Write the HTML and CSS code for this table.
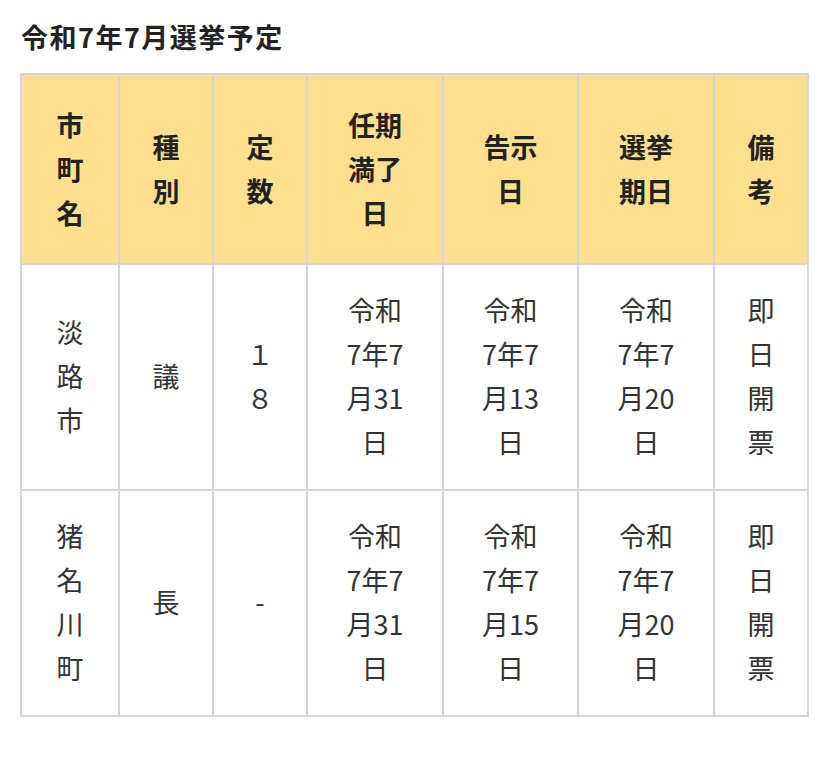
FILE: index.html
```html
<!DOCTYPE html>
<html lang="ja">
<head>
<meta charset="utf-8">
<title>令和7年7月選挙予定</title>
<link rel="stylesheet" href="styles.css">
</head>
<body>
<h2 class="title">令和7年7月選挙予定</h2>
<table class="sched">
  <colgroup>
    <col class="c-name">
    <col class="c-kind">
    <col class="c-seat">
    <col class="c-date">
    <col class="c-date2">
    <col class="c-date">
    <col class="c-note">
  </colgroup>
  <thead>
    <tr>
      <th>市町名</th>
      <th>種別</th>
      <th>定数</th>
      <th class="wide">任期満了日</th>
      <th class="wide">告示日</th>
      <th class="wide">選挙期日</th>
      <th>備考</th>
    </tr>
  </thead>
  <tbody>
    <tr>
      <td>淡路市</td>
      <td>議</td>
      <td>１８</td>
      <td class="wide">令和7年7月31日</td>
      <td class="wide">令和7年7月13日</td>
      <td class="wide">令和7年7月20日</td>
      <td>即日開票</td>
    </tr>
    <tr>
      <td>猪名川町</td>
      <td>長</td>
      <td>-</td>
      <td class="wide">令和7年7月31日</td>
      <td class="wide">令和7年7月15日</td>
      <td class="wide">令和7年7月20日</td>
      <td>即日開票</td>
    </tr>
  </tbody>
</table>
</body>
</html>
```
FILE: styles.css
```css
html, body {
  margin: 0;
  background: #ffffff;
}
body {
  padding: 18px 20px;
  font-family: "Noto Sans CJK JP", "Noto Sans", sans-serif;
  color: #333333;
}
.title {
  margin: 0 0 17px 1px;
  font-size: 27px;
  line-height: 38px;
  letter-spacing: 1.5px;
  font-weight: 700;
  color: #222222;
}
.sched {
  border-collapse: collapse;
  table-layout: fixed;
  width: 787px;
  font-size: 27px;
}
.c-name { width: 98px; }
.c-kind { width: 94px; }
.c-seat { width: 94px; }
.c-date { width: 136px; }
.c-date2 { width: 135px; }
.c-note { width: 94px; }
.sched th,
.sched td {
  border: 2px solid #d4d4df;
  text-align: center;
  vertical-align: middle;
  line-height: 44px;
  word-break: break-all;
}
.sched th {
  background: #fde08f;
  font-weight: 700;
  color: #222222;
  padding: 28px 28px;
}
.sched td {
  padding: 23px 28px 25px;
  font-weight: 400;
}
.sched th.wide,
.sched td.wide {
  padding-left: 36px;
  padding-right: 36px;
}
```
